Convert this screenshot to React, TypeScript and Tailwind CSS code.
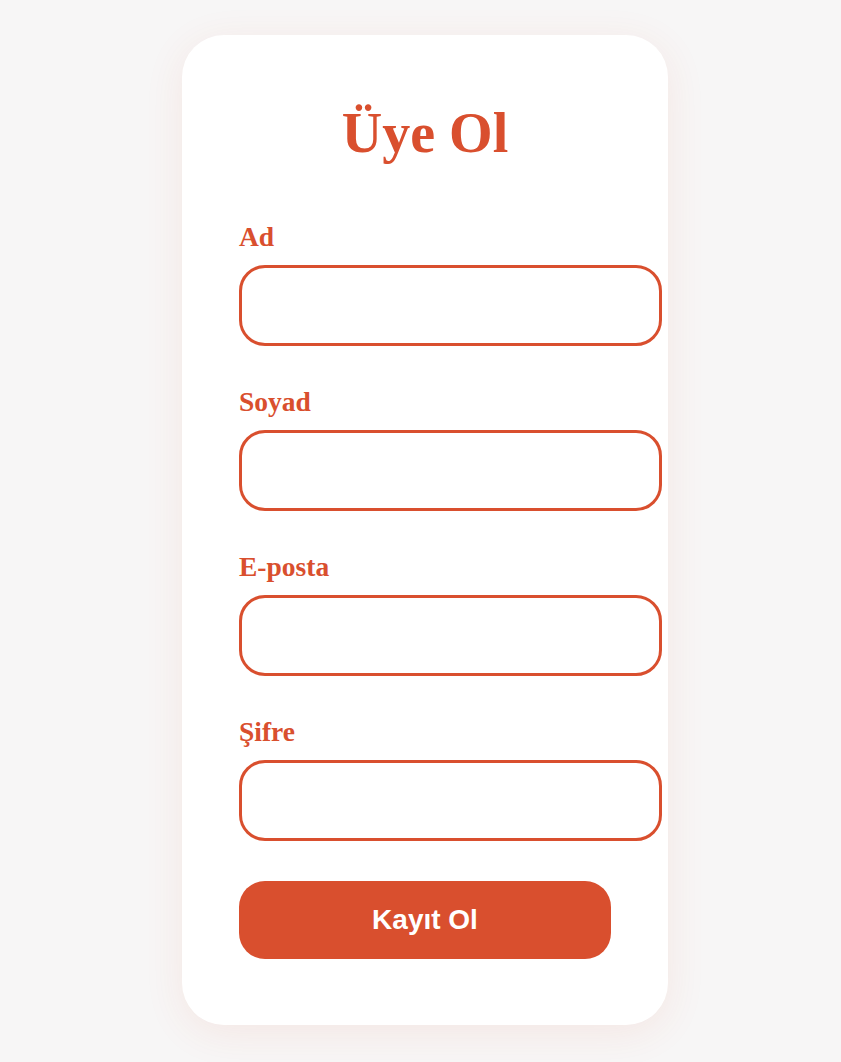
const fields = ["Ad", "Soyad", "E-posta", "Şifre"];

export default function App() {
  return (
    <div className="min-h-[1062px] bg-[#f7f6f6] pt-[35px] pl-[182px]">
      <div className="w-[486px] rounded-[42px] bg-white px-[57px] pt-[70px] pb-[66px] shadow-[0_8px_40px_rgba(217,79,45,0.09)]">
        <h1 className="text-center text-[56px] leading-none font-bold text-[#d94f2e] font-['Liberation_Serif',serif]">
          Üye Ol
        </h1>

        <form className="mt-[62px] flex flex-col gap-[42px]">
          {fields.map((f) => (
            <div key={f} className="flex flex-col">
              <label className="text-[27.5px] leading-[28px] font-bold text-[#d94f2e] font-['Liberation_Serif',serif]">
                {f}
              </label>
              <input
                type={f === "Şifre" ? "password" : "text"}
                className="mt-[14px] h-[81px] w-[423px] rounded-[26px] border-[3px] border-[#d94f2e] bg-white px-4 outline-none"
              />
            </div>
          ))}
        </form>

        <button className="mt-[40px] h-[78px] w-[372px] rounded-[26px] bg-[#d94f2e] text-[28px] font-bold text-white font-['Liberation_Sans',sans-serif]">
          Kayıt Ol
        </button>
      </div>
    </div>
  );
}
